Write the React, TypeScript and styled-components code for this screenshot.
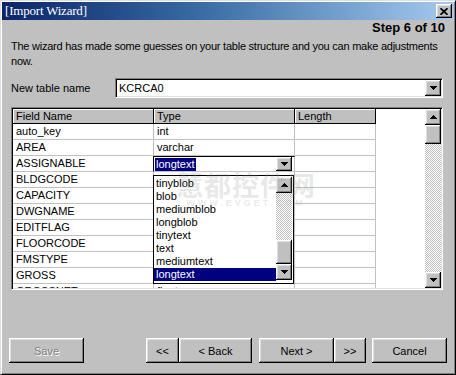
import styled, {createGlobalStyle} from 'styled-components';

const GlobalStyle = createGlobalStyle`
  html, body {
    margin: 0;
    padding: 0;
    background: #c0c0c0;
  }
  body {
    font-family: 'Liberation Sans', Arial, sans-serif;
    font-size: 11px;
    color: #000;
  }
  #root {
    width: 456px;
    height: 375px;
  }
`;

const raised = `
  background: #c0c0c0;
  box-shadow: inset -1px -1px #000, inset 1px 1px #fff, inset -2px -2px #808080, inset 2px 2px #dfdfdf;
`;

const hatch = `
  background: repeating-conic-gradient(#c0c0c0 0 25%, #fff 0 50%) 0 0 / 2px 2px;
`;

// type cells under the open list are covered, so they stay empty
const fields: [string, string][] = [
  ['auto_key', 'int'],
  ['AREA', 'varchar'],
  ['ASSIGNABLE', 'longtext'],
  ['BLDGCODE', ''],
  ['CAPACITY', ''],
  ['DWGNAME', ''],
  ['EDITFLAG', ''],
  ['FLOORCODE', ''],
  ['FMSTYPE', ''],
  ['GROSS', ''],
  ['GROSSNET', 'float'],
];

const types = ['tinyblob', 'blob', 'mediumblob', 'longblob', 'tinytext', 'text', 'mediumtext', 'longtext'];

const DownArrow = () => (
  <svg width="7" height="4" shapeRendering="crispEdges">
    <path d="M0 0h7v1h-1v1h-1v1h-1v1h-1v-1h-1v-1h-1v-1h-1z" fill="#000" />
  </svg>
);

const UpArrow = () => (
  <svg width="7" height="4" shapeRendering="crispEdges">
    <path d="M0 4h7v-1h-1v-1h-1v-1h-1v-1h-1v1h-1v1h-1v1h-1z" fill="#000" />
  </svg>
);

const App = () => (
  <>
    <GlobalStyle />
    <Window>
      <TitleBar>
        <TitleText>[Import Wizard]</TitleText>
        <CloseButton>
          <svg width="8" height="7">
            <path d="M0.5 0.2l7 6.6M7.5 0.2l-7 6.6" stroke="#000" strokeWidth="1.7" />
          </svg>
        </CloseButton>
      </TitleBar>
      <Body>
        <StepLabel>Step 6 of 10</StepLabel>
        <Description>
          The wizard has made some guesses on your table structure and you can make adjustments now.
        </Description>
        <NameRow>
          <FieldLabel>New table name</FieldLabel>
          <NameInput>
            <InputText>KCRCA0</InputText>
            <DropButton $h={16}>
              <DownArrow />
            </DropButton>
          </NameInput>
        </NameRow>
        <GridFrame>
          <TableArea>
            <HeaderCell>Field Name</HeaderCell>
            <HeaderCell>Type</HeaderCell>
            <HeaderCell>Length</HeaderCell>
            <Filler />
            {fields.map(([name, type]) => (
              <Row key={name}>
                <Cell>{name}</Cell>
                {name === 'ASSIGNABLE' ? (
                  <ComboCell>
                    <Selected>{type}</Selected>
                    <DropButton $h={14}>
                      <DownArrow />
                    </DropButton>
                    <DropList>
                      <ListItems>
                        {types.map(t => (
                          <ListItem key={t} $active={t === 'longtext'}>
                            {t}
                          </ListItem>
                        ))}
                      </ListItems>
                      <ListScroll>
                        <ScrollButton>
                          <UpArrow />
                        </ScrollButton>
                        <Track />
                        <Thumb $h={24} />
                        <ScrollButton>
                          <DownArrow />
                        </ScrollButton>
                      </ListScroll>
                    </DropList>
                  </ComboCell>
                ) : (
                  <Cell>{type}</Cell>
                )}
                <Cell />
                <Filler />
              </Row>
            ))}
          </TableArea>
          <VScroll>
            <ScrollButton>
              <UpArrow />
            </ScrollButton>
            <Thumb $h={19} />
            <Track />
            <ScrollButton>
              <DownArrow />
            </ScrollButton>
          </VScroll>
          <Watermark>
            慧都控件网
            <small>WWW.EVGET.COM</small>
          </Watermark>
        </GridFrame>
        <ButtonBar>
          <Button $w={75} disabled>
            Save
          </Button>
          <Spacer />
          <ButtonPair>
            <Button $w={33}>&lt;&lt;</Button>
            <Button $w={73}>&lt; Back</Button>
          </ButtonPair>
          <ButtonPair>
            <Button $w={75}>Next &gt;</Button>
            <Button $w={32}>&gt;&gt;</Button>
          </ButtonPair>
          <Button $w={75}>Cancel</Button>
        </ButtonBar>
      </Body>
    </Window>
  </>
);

export default App;

const Window = styled.div`
  box-sizing: border-box;
  width: 456px;
  height: 375px;
  display: flex;
  flex-direction: column;
  padding: 1px;
  background: #c0c0c0;
  border: 1px solid;
  border-color: #dfdfdf #000 #000 #dfdfdf;
  box-shadow: inset 1px 1px #fff, inset -1px -1px #808080;
`;

const TitleBar = styled.div`
  height: 18px;
  display: flex;
  align-items: center;
  justify-content: space-between;
  background: linear-gradient(90deg, #0a246a 0%, #3a6ea5 45%, #a6caf0 100%);
  padding: 0 2px 0 3px;
`;

const TitleText = styled.span`
  color: #fff;
  font-family: 'Liberation Serif', 'Times New Roman', serif;
  font-size: 13px;
  letter-spacing: -0.2px;
`;

const CloseButton = styled.div`
  ${raised};
  width: 16px;
  height: 14px;
  display: flex;
  align-items: center;
  justify-content: center;
`;

const Body = styled.div`
  flex: 1;
  display: flex;
  flex-direction: column;
  padding: 0 7px 10px 7px;
`;

const StepLabel = styled.div`
  align-self: flex-end;
  margin-right: 2px;
  font-size: 13px;
  font-weight: 700;
  line-height: 16px;
`;

const Description = styled.p`
  margin: 3px 2px 0 2px;
  line-height: 15px;
  letter-spacing: -0.24px;
`;

const NameRow = styled.div`
  display: flex;
  align-items: center;
  margin: 9px 4px 0 2px;
`;

const FieldLabel = styled.span`
  width: 104px;
  flex-shrink: 0;
`;

const NameInput = styled.div`
  flex: 1;
  height: 20px;
  box-sizing: border-box;
  display: flex;
  align-items: center;
  padding: 1px;
  background: #fff;
  border: 1px solid;
  border-color: #808080 #fff #fff #808080;
  box-shadow: inset 1px 1px #000, inset -1px -1px #dfdfdf;
`;

const InputText = styled.span`
  flex: 1;
  padding-left: 2px;
`;

const DropButton = styled.div<{$h: number}>`
  ${raised};
  width: 16px;
  height: ${({$h}) => $h}px;
  flex-shrink: 0;
  display: flex;
  align-items: center;
  justify-content: center;
`;

const GridFrame = styled.div`
  position: relative;
  box-sizing: border-box;
  height: 183px;
  margin: 9px 4px 0 2px;
  display: flex;
  padding: 1px;
  background: #fff;
  border: 1px solid;
  border-color: #808080 #fff #fff #808080;
  box-shadow: inset 1px 1px #000, inset -1px -1px #dfdfdf;
`;

const TableArea = styled.div`
  flex: 1;
  display: grid;
  grid-template-columns: 141px 141px 81px 1fr;
  grid-template-rows: 15px;
  grid-auto-rows: 16px;
  background: #fff;
  overflow: hidden;
`;

const Row = styled.div`
  display: contents;
`;

const HeaderCell = styled.div`
  box-sizing: border-box;
  background: #c0c0c0;
  border-right: 1px solid #000;
  border-bottom: 1px solid #000;
  box-shadow: inset 1px 1px #fff;
  padding-left: 3px;
  line-height: 14px;
  white-space: nowrap;
`;

const Cell = styled.div`
  box-sizing: border-box;
  border-right: 1px solid #c0c0c0;
  border-bottom: 1px solid #c0c0c0;
  padding-left: 3px;
  line-height: 15px;
  white-space: nowrap;
  overflow: hidden;
`;

const Filler = styled.div`
  background: #fff;
`;

const ComboCell = styled.div`
  position: relative;
  box-sizing: border-box;
  display: flex;
  align-items: center;
  padding: 0 2px 0 1px;
  border: 1px solid;
  border-color: #000 #c0c0c0 #c0c0c0 #000;
  margin-left: -1px;
  z-index: 2;
`;

const Selected = styled.span`
  margin-right: auto;
  background: #000080;
  color: #fff;
  padding: 0 1px;
  line-height: 13px;
`;

const DropList = styled.div`
  position: absolute;
  top: 18px;
  left: -1px;
  width: 141px;
  height: 109px;
  box-sizing: border-box;
  display: flex;
  background: #fff;
  border: 1px solid #000;
`;

const ListItems = styled.div`
  flex: 1;
  padding-top: 1px;
`;

const ListItem = styled.div<{$active?: boolean}>`
  height: 13px;
  line-height: 13px;
  padding-left: 2px;
  background: ${({$active}) => ($active ? '#000080' : 'transparent')};
  color: ${({$active}) => ($active ? '#fff' : '#000')};
`;

const ListScroll = styled.div`
  width: 16px;
  display: flex;
  flex-direction: column;
  padding: 1px 1px 3px 0;
`;

const VScroll = styled.div`
  width: 16px;
  display: flex;
  flex-direction: column;
`;

const ScrollButton = styled.div`
  ${raised};
  height: 16px;
  flex-shrink: 0;
  display: flex;
  align-items: center;
  justify-content: center;
`;

const Thumb = styled.div<{$h: number}>`
  ${raised};
  height: ${({$h}) => $h}px;
  flex-shrink: 0;
`;

const Track = styled.div`
  ${hatch};
  flex: 1;
`;

const Watermark = styled.div`
  position: absolute;
  left: 164px;
  top: 63px;
  display: flex;
  flex-direction: column;
  align-items: center;
  font-family: 'Noto Sans CJK SC', sans-serif;
  font-size: 27px;
  font-weight: 700;
  line-height: 28px;
  letter-spacing: 1px;
  color: rgba(150, 150, 150, 0.22);
  pointer-events: none;
  z-index: 3;

  small {
    font-family: 'Liberation Sans', Arial, sans-serif;
    font-size: 9px;
    line-height: 9px;
    letter-spacing: 3px;
  }
`;

const ButtonBar = styled.div`
  margin-top: auto;
  display: flex;
  gap: 7px;
`;

const ButtonPair = styled.div`
  display: flex;
  gap: 1px;
`;

const Spacer = styled.div`
  flex: 1;
`;

const Button = styled.button<{$w: number}>`
  ${raised};
  width: ${({$w}) => $w}px;
  height: 25px;
  border: none;
  padding: 0;
  font-family: 'Liberation Sans', Arial, sans-serif;
  font-size: 11px;
  color: #000;

  &:disabled {
    color: #808080;
    text-shadow: 1px 1px #fff;
  }

  &:last-child {
    margin-left: -1px;
  }
`;
